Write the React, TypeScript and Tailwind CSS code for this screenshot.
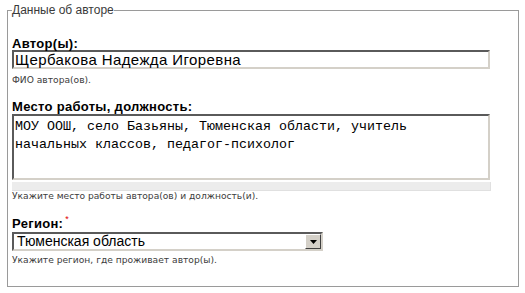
import React from 'react';

const hint = "font-['DejaVu_Sans',sans-serif] text-[9.15px] leading-[11px] text-[#3c3c3c]";
const label = "font-['Liberation_Sans',Arial,sans-serif] font-bold text-[13px] leading-[13px] tracking-[0.3px] text-black";
const inset = 'border-2 border-t-[#5a5a5a] border-l-[#5a5a5a] border-r-[#d4d0c8] border-b-[#d4d0c8] bg-white';

export default function App() {
  return (
    <div className="w-[525px] h-[293px] bg-white pt-[3px] font-['Liberation_Sans',Arial,sans-serif]">
      <fieldset className="ml-[7px] w-[512px] border border-[#9a9a9a] pl-[4px] pb-[20px]">
        <legend className="px-0 text-[12px] leading-[14px] text-[#3a3a3a]">Данные об авторе</legend>

        <div className={`mt-[20px] ${label}`}>Автор(ы):</div>
        <div className={`h-[19px] w-[478px] ${inset} pl-[1px] text-[15px] leading-[15px] tracking-[0.4px] text-black`}>
          Щербакова Надежда Игоревна
        </div>
        <div className={`mt-[6px] ${hint}`}>ФИО автора(ов).</div>

        <div className={`mt-[14px] ${label}`}>Место работы, должность:</div>
        <div
          className={`mt-[1px] h-[66px] w-[478px] ${inset} pl-[1px] pt-[2px] font-['Liberation_Mono','Courier_New',monospace] text-[13.33px] leading-[18px] text-black whitespace-pre`}
        >
          {'МОУ ООШ, село Базьяны, Тюменская области, учитель\nначальных классов, педагог-психолог'}
        </div>
        <div className="mt-[2px] h-[9px] w-[479px] bg-[#ececec] border-r border-b border-[#e0e0e0]" />
        <div className={hint}>Укажите место работы автора(ов) и должность(и).</div>

        <div className={`mt-[15px] ${label} flex items-start`}>
          Регион:
          <span className="ml-[2px] -mt-[2px] text-[9px] leading-[9px] font-normal text-[#e00000]">*</span>
        </div>
        <div className={`mt-[2px] h-[19px] w-[311px] ${inset} flex items-center`}>
          <span className="flex-1 pl-[3px] text-[14px] leading-[15px] text-black">Тюменская область</span>
          <span className="h-[15px] w-[16px] bg-[#d4d0c8] border border-t-white border-l-white border-r-[#404040] border-b-[#404040] flex items-center justify-center">
            <svg width="7" height="4" viewBox="0 0 7 4">
              <path d="M0 0h7L3.5 4z" fill="#000" />
            </svg>
          </span>
        </div>
        <div className={`mt-[4px] ${hint}`}>Укажите регион, где проживает автор(ы).</div>
      </fieldset>
    </div>
  );
}
